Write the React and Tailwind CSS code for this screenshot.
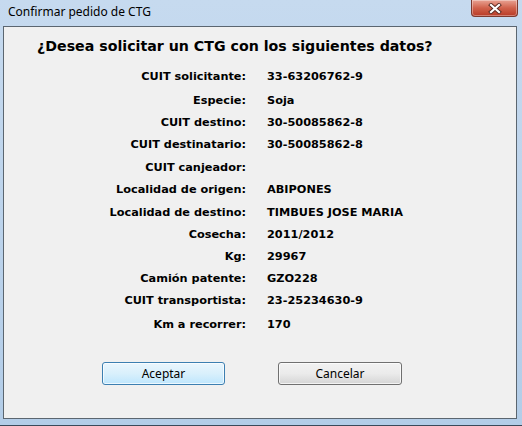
const rows = [
  { label: "CUIT solicitante:", value: "33-63206762-9", mt: "mt-0" },
  { label: "Especie:", value: "Soja", mt: "mt-[2px]" },
  { label: "CUIT destino:", value: "30-50085862-8", mt: "mt-0" },
  { label: "CUIT destinatario:", value: "30-50085862-8", mt: "mt-0" },
  { label: "CUIT canjeador:", value: "", mt: "mt-[1px]" },
  { label: "Localidad de origen:", value: "ABIPONES", mt: "mt-0" },
  { label: "Localidad de destino:", value: "TIMBUES JOSE MARIA", mt: "mt-[1px]" },
  { label: "Cosecha:", value: "2011/2012", mt: "mt-0" },
  { label: "Kg:", value: "29967", mt: "mt-0" },
  { label: "Camión patente:", value: "GZO228", mt: "mt-0" },
  { label: "CUIT transportista:", value: "23-25234630-9", mt: "mt-0" },
  { label: "Km a recorrer:", value: "170", mt: "mt-[2px]" },
];

function CloseButton() {
  return (
    <div className="h-[17px] w-[47px] rounded-b-[4px] border border-t-0 border-[#7d3a2f] bg-gradient-to-b from-[#e8a293] via-[#d0614b] to-[#b83a26] flex items-center justify-center shadow-[inset_0_0_0_1px_rgba(255,255,255,0.35)]">
      <svg width="14" height="11" viewBox="0 0 14 11">
        <path d="M3 2 L11 9 M11 2 L3 9" stroke="#5a2a22" strokeWidth="4" strokeLinecap="square" />
        <path d="M3 2 L11 9 M11 2 L3 9" stroke="#ffffff" strokeWidth="2.2" strokeLinecap="square" />
      </svg>
    </div>
  );
}

export default function App() {
  return (
    <div className="w-[522px] h-[426px] bg-gradient-to-b from-[#c6daef] to-[#b3cde8] flex flex-col border-b border-[#3a4a5a] overflow-hidden">
      {/* Title bar */}
      <div className="h-[26px] flex items-start shrink-0">
        <span className="pl-[8px] pt-[5px] text-[12px] leading-[14px] text-black font-['Noto_Sans',sans-serif]">
          Confirmar pedido de CTG
        </span>
        <div className="ml-auto mr-[4px]">
          <CloseButton />
        </div>
      </div>

      {/* Client area */}
      <div className="ml-[3px] mr-[5px] h-[393px] shrink-0 border border-[#5b6670] bg-[#f0f0f0] flex flex-col font-['DejaVu_Sans',sans-serif] text-black">
        <h1 className="pt-[10px] pl-[33px] text-[14.2px] leading-[19px] font-bold">
          ¿Desea solicitar un CTG con los siguientes datos?
        </h1>

        <div className="mt-[10px] flex flex-col">
          {rows.map((r) => (
            <div key={r.label} className={`flex h-[22px] items-center text-[11.3px] font-bold ${r.mt}`}>
              <span className="w-[242px] text-right">{r.label}</span>
              <span className="pl-[21px]">{r.value}</span>
            </div>
          ))}
        </div>

        <div className="mt-[26px] flex pl-[98px] gap-[53px] font-['Noto_Sans',sans-serif] text-[12px]">
          <button className="w-[123px] h-[23px] rounded-[3px] border border-[#3c7fb1] bg-gradient-to-b from-[#eaf6fd] via-[#d9f0fc] to-[#bee6fd] shadow-[inset_0_0_0_1px_rgba(255,255,255,0.7)] leading-[20px]">
            Aceptar
          </button>
          <button className="w-[124px] h-[23px] rounded-[3px] border border-[#707070] bg-gradient-to-b from-[#f2f2f2] via-[#ebebeb] to-[#d5d5d5] shadow-[inset_0_0_0_1px_rgba(255,255,255,0.7)] leading-[20px]">
            Cancelar
          </button>
        </div>
      </div>
    </div>
  );
}
